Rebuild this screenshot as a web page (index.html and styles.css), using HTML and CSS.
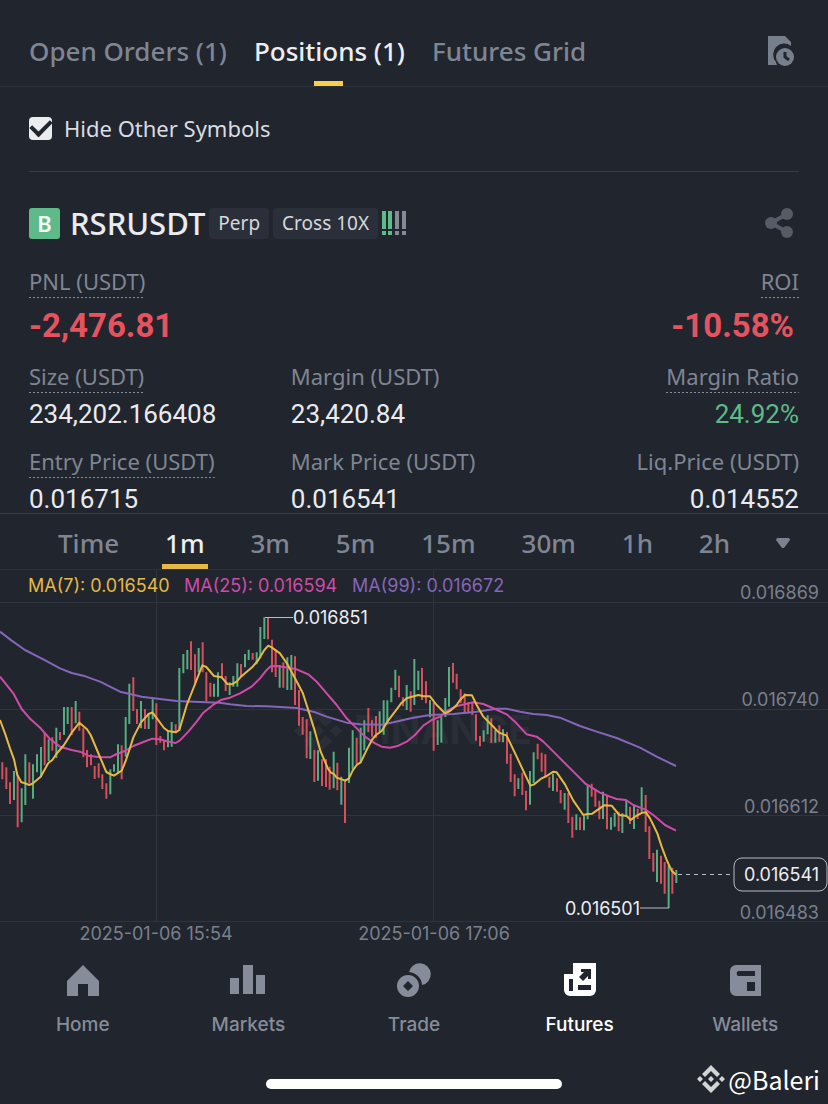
FILE: index.html
```html
<!DOCTYPE html>
<html lang="en">
<head>
<meta charset="utf-8">
<meta name="viewport" content="width=device-width, initial-scale=1">
<title>Futures – Positions</title>
<link rel="stylesheet" href="styles.css">
</head>
<body>
<div class="app">
  <header class="tabs">
    <button class="tab" type="button">Open Orders (1)</button>
    <button class="tab tab-active" type="button">Positions (1)</button>
    <button class="tab" type="button">Futures Grid</button>
    <button class="icon-button tabs-history" type="button" aria-label="Order history">
      <svg width="28" height="32" viewBox="0 0 28 32">
        <path fill="#787f8c" d="M1 1h17l6 6v4a11 11 0 0 0-15 16 9 9 0 0 0 1 3H1z"/>
        <circle cx="18" cy="22" r="9" fill="#787f8c"/>
        <path d="M18 17v5l4 3" fill="none" stroke="#21252e" stroke-width="3"/>
      </svg>
    </button>
  </header>

  <main class="position">
    <label class="filter">
      <input class="filter-box" type="checkbox" checked>
      <span>Hide Other Symbols</span>
    </label>

    <section class="card">
      <div class="symbol">
        <span class="side">B</span>
        <h1 class="symbol-name">RSRUSDT</h1>
        <span class="tag">Perp</span>
        <span class="tag">Cross 10X</span>
        <svg class="risk" width="25" height="25" viewBox="0 0 25 25">
          <path fill="#5eba89" d="M0 0h4v18H0zM6 0h4v18H6zM0 20h4v4H0zM6 20h4v4H6z"/>
          <path fill="#848a96" d="M13 0h4v18h-4zM20 0h4v18h-4zM13 20h4v4h-4zM20 20h4v4h-4z"/>
        </svg>
        <button class="icon-button symbol-share" type="button" aria-label="Share">
          <svg width="28" height="30" viewBox="0 0 28 30">
            <path d="M22 6 6 15l16 9" fill="none" stroke="#555b67" stroke-width="4"/>
            <g fill="#555b67"><circle cx="22" cy="6" r="6"/><circle cx="6" cy="15" r="6"/><circle cx="22" cy="24" r="6"/></g>
          </svg>
        </button>
      </div>

      <dl class="stats stats-main">
        <div class="stat"><dt><span class="hint">PNL (USDT)</span></dt><dd class="loss">-2,476.81</dd></div>
        <div class="stat stat-end"><dt><span class="hint">ROI</span></dt><dd class="loss">-10.58%</dd></div>
      </dl>
      <dl class="stats">
        <div class="stat"><dt><span class="hint">Size (USDT)</span></dt><dd>234,202.166408</dd></div>
        <div class="stat"><dt>Margin (USDT)</dt><dd>23,420.84</dd></div>
        <div class="stat stat-end"><dt><span class="hint">Margin Ratio</span></dt><dd class="gain">24.92%</dd></div>
        <div class="stat"><dt><span class="hint">Entry Price (USDT)</span></dt><dd>0.016715</dd></div>
        <div class="stat"><dt>Mark Price (USDT)</dt><dd>0.016541</dd></div>
        <div class="stat stat-end"><dt>Liq.Price (USDT)</dt><dd>0.014552</dd></div>
      </dl>
    </section>
  </main>

  <section class="chart">
    <div class="frames">
      <button class="frame" type="button">Time</button>
      <button class="frame frame-active" type="button">1m</button>
      <button class="frame" type="button">3m</button>
      <button class="frame" type="button">5m</button>
      <button class="frame" type="button">15m</button>
      <button class="frame" type="button">30m</button>
      <button class="frame" type="button">1h</button>
      <button class="frame" type="button">2h</button>
      <button class="frame" type="button" aria-label="More intervals"><svg width="14" height="10" viewBox="0 0 14 10"><path fill="#7b828f" d="M1 0h12l1 2-6 8H6L0 2z"/></svg></button>
    </div>
    <svg class="plot" viewBox="0 0 828 380" role="img" aria-label="RSRUSDT one minute candles">
      <path class="grid" d="M0 32.500H828M0 139.500H828M0 245.500H828M0 351.500H828M156.500 0V352M433.500 0V352"/>
      <g class="brand">
        <path d="M318 707l14 14-6 6-8-8-8 8-6-6zM318 755l14-14-6-6-8 8-8-8-6 6zM300 725l6 6-6 6-6-6zM336 725l6 6-6 6-6-6zM318 725l6 6-6 6-6-6z" transform="translate(0 -570)"/>
        <text x="354" y="174">BINANCE</text>
      </g>
      <g transform="scale(.33333)">
        <path id="up" class="candle up"/>
        <path id="down" class="candle down"/>
        <path class="ma ma99" d="M0 185L35 212 75 240 130 268 180 295 215 309 250 317 300 335 360 365 400 374 425 380 480 387 530 393 600 396 660 398 690 403 740 408 800 409 840 411 890 414 940 425 980 440 1040 458 1080 463 1145 464 1180 457 1240 443 1290 435 1360 432 1430 425 1490 416 1520 416 1560 425 1600 432 1640 435 1680 443 1740 468 1790 485 1850 504 1920 533 1970 560 2028 588"/>
        <path class="ma ma25" d="M0 320L40 370 65 417 92 448 122 475 150 507 180 530 215 540 240 545 265 557 295 561 330 562 350 552 375 543 400 528 430 516 457 506 480 508 500 514 527 519 540 511 565 485 590 455 610 428 640 404 665 389 690 383 720 370 755 350 780 325 800 300 812 289 830 288 855 292 890 298 925 313 950 335 980 370 1010 405 1040 445 1065 470 1095 500 1125 520 1145 530 1170 533 1195 527 1220 515 1245 495 1270 467 1295 450 1320 440 1345 420 1375 407 1420 397 1450 402 1485 417 1520 433 1545 455 1580 493 1610 500 1630 515 1675 560 1720 605 1755 640 1800 668 1830 680 1850 687 1878 690 1900 705 1935 718 1960 735 1995 765 2028 782"/>
        <path class="ma ma7" d="M0 450L15 490 30 535 42 568 52 615 64 637 76 640 88 645 99 640 122 620 145 579 157 570 169 552 192 525 215 488 238 458 261 478 272 495 296 552 319 606 330 612 342 617 365 602 377 573 388 540 400 502 423 457 446 432 457 427 469 443 492 474 504 483 527 487 538 480 561 403 584 345 607 286 619 291 642 318 665 322 682 342 695 343 710 335 723 320 735 310 758 290 775 270 793 240 805 227 815 232 840 250 862 282 885 325 908 368 920 405 942 475 962 545 985 598 993 608 1002 612 1010 623 1025 628 1036 632 1047 625 1058 602 1070 585 1082 577 1105 530 1117 508 1128 495 1145 483 1162 455 1185 425 1205 398 1220 385 1255 375 1270 379 1290 379 1310 405 1335 430 1350 423 1370 405 1380 390 1395 375 1416 376 1430 405 1450 440 1475 465 1496 487 1520 497 1550 560 1575 613 1591 647 1603 643 1625 625 1640 618 1660 605 1670 607 1695 643 1720 692 1750 735 1763 732 1777 731 1795 718 1812 706 1835 707 1858 735 1880 738 1892 750 1905 740 1927 728 1938 727 1950 745 1960 765 1972 790 1985 830 2000 870 2015 902 2028 914"/>
      </g>
      <text class="ma7-text" x="28" y="22">MA(7): 0.016540</text>
      <text class="ma25-text" x="184" y="22">MA(25): 0.016594</text>
      <text class="ma99-text" x="352" y="22">MA(99): 0.016672</text>
      <g class="axis" text-anchor="end">
        <text x="819" y="29">0.016869</text>
        <text x="819" y="136">0.016740</text>
        <text x="819" y="243">0.016612</text>
        <text x="819" y="349">0.016483</text>
      </g>
      <g class="axis" text-anchor="middle">
        <text x="156" y="370">2025-01-06 15:54</text>
        <text x="434" y="370">2025-01-06 17:06</text>
      </g>
      <path class="pointer" d="M265 47.500H293M640 338H669"/>
      <text class="mark" x="293" y="54">0.016851</text>
      <text class="mark" x="640" y="345" text-anchor="end">0.016501</text>
      <path class="pointer" stroke-dasharray="4 4" d="M678 304.500H734"/>
      <rect class="price" x="734" y="288" width="93" height="33" rx="8"/>
      <text class="mark" x="819" y="311" text-anchor="end">0.016541</text>
    </svg>
  </section>

  <nav class="nav">
    <a class="nav-item" href="#home">
      <svg width="36" height="36" viewBox="0 0 36 36"><path fill="currentColor" d="M18 3l16 16v15H23V22H13v12H2V19z"/></svg>
      Home
    </a>
    <a class="nav-item" href="#markets">
      <svg width="36" height="36" viewBox="0 0 36 36"><path fill="currentColor" d="M0 16h9v16H0zM13 3h10v29H13zM26 13h9v19h-9z"/></svg>
      Markets
    </a>
    <a class="nav-item" href="#trade">
      <svg width="36" height="36" viewBox="0 0 36 36">
        <path fill="currentColor" fill-rule="evenodd" d="M12 13a11 11 0 1 1 0 22 11 11 0 0 1 0-22zm0 6l-5 5 5 5 5-5z"/>
        <path fill="currentColor" d="M13 10A11 11 0 1 1 26 23 14 14 0 0 0 13 10z"/>
      </svg>
      Trade
    </a>
    <a class="nav-item nav-active" href="#futures">
      <svg width="36" height="36" viewBox="0 0 36 36"><path fill="currentColor" fill-rule="evenodd" d="M11 1h23v27a6 6 0 0 1-6 6H8a6 6 0 0 1-6-6V12h9zM7 17v12h4V17zm9 6v5h13v-5zM19 7v3h3l-5 5 4 4 5-5v3h3V7z"/></svg>
      Futures
    </a>
    <a class="nav-item" href="#wallets">
      <svg width="36" height="36" viewBox="0 0 36 36"><path fill="currentColor" fill-rule="evenodd" d="M9 3h25v31H9a6 6 0 0 1-6-6V9a6 6 0 0 1 6-6zm2 6a3 3 0 0 0 0 5h17V9zm9 11v9h8v-9z"/></svg>
      Wallets
    </a>
  </nav>

  <div class="home-bar"></div>
  <div class="author">
    <svg width="28" height="28" viewBox="0 0 28 28"><path fill="#d3d4d6" d="M14 0l9 9-3 3-6-6-6 6-3-3zM14 28l9-9-3-3-6 6-6-6-3 3zM3 11l3 3-3 3-3-3zM25 11l3 3-3 3-3-3zM14 11l3 3-3 3-3-3z"/></svg>
    <span>@Baleri</span>
  </div>
</div>
<script src="chart.js"></script>
</body>
</html>
```

FILE: chart.js
```js
// One entry per minute: direction, top and bottom of the bar.
const bars = `
r577-628 r592-657 r637-702 g603-690 r615-772 g655-757 g553-705 r577-640 g583-686 g553-607
g531-620 r488-586 g508-573 r502-542 g473-564 r486-510 g411-495 g411-462 r411-495 g393-460
r425-482 r475-562 r540-592 r553-586 r588-627 r580-623 r613-657 r640-686 g598-673 g583-605
g523-608 r526-628 g441-560 g341-462 r322-423 r417-462 g393-475 r417-477 g430-477 g388-448
r400-525 r498-518 r510-541 g483-532 g456-530 r463-488 g294-482 g252-310 g240-298 r214-300
r253-343 g234-307 r217-307 r307-395 r338-380 g341-380 g307-380 r280-325 r318-363 g337-375
g318-350 g280-350 r282-320 g252-292 g239-270 r249-269 g247-283 g171-265 g142-207 r142-208
r209-307 r240-321 g285-353 r277-353 g262-360 g255-360 r259-405 r360-467 r441-494 r448-565
g484-567 r540-636 g541-632 r568-648 r568-651 r590-659 g545-655 r578-661 g620-704 r628-759
g533-639 g481-598 r503-583 g473-578 g451-541 r414-487 r451-500 r438-503 g424-487 g391-494
g391-455 g353-397 g299-360 r317-382 r382-409 g345-420 r364-425 g267-405 g302-360 r294-390
r334-400 g390-442 r397-542 g451-525 g438-518 g384-441 g291-410 r279-338 r311-358 r358-400
r370-432 r397-430 r397-435 r433-512 r498-529 g481-515 g436-493 r445-519 g480-518 r466-515
g478-517 r486-581 r551-636 r613-679 g625-657 r608-675 r662-721 g603-704 g547-640 r521-568
r548-605 r553-620 r620-653 g611-663 r625-665 r660-700 g669-719 r669-759 r740-803 g733-780
r742-780 g738-781 g645-748 r641-680 r657-710 r692-748 g665-747 r678-778 g742-779 g728-770
r725-784 g730-789 g693-735 r710-762 g708-777 r716-747 g652-725 r675-786 r769-867 r849-905
g839-936 r857-941 r876-971 g886-1014 r893-971 g900-939`.trim().split(/\s+/);

const first = 7;
const last = 2029;
const step = (last - first) / (bars.length - 1);
const paths = { g: "", r: "" };

bars.forEach((bar, i) => {
  const [top, bottom] = bar.slice(1).split("-");
  paths[bar[0]] += `M${Math.round(first + i * step)} ${top}V${bottom}`;
});

document.getElementById("up").setAttribute("d", paths.g);
document.getElementById("down").setAttribute("d", paths.r);
```

FILE: styles.css
```css
* {
  box-sizing: border-box;
}

body {
  margin: 0;
  background: #21252e;
  color: #e9ebef;
  font-family: "Noto Sans", "Liberation Sans", sans-serif;
}

button {
  padding: 0;
  border: 0;
  background: none;
  color: inherit;
  font: inherit;
}

svg {
  display: block;
}

.app {
  position: relative;
  min-height: 100vh;
}

.tabs {
  display: flex;
  align-items: stretch;
  gap: 27px;
  height: 87px;
  padding: 0 33px 0 29px;
  border-bottom: 1px solid #2e333d;
}

.tab {
  position: relative;
  padding-top: 15px;
  color: #7f8592;
  font-size: 26px;
  font-weight: 500;
  white-space: nowrap;
}

.tab-active {
  color: #eceef2;
}

.tab-active::after {
  content: "";
  position: absolute;
  bottom: 0;
  left: 50%;
  width: 29px;
  height: 5px;
  margin-left: -15px;
  background: #f7ce4f;
}

.tabs-history {
  margin-left: auto;
  padding-top: 15px;
}

.position {
  padding: 0 29px;
}

.filter {
  display: flex;
  align-items: center;
  gap: 12px;
  height: 85px;
  padding-bottom: 2px;
  border-bottom: 1px solid #373b46;
  color: #d9dce2;
  font-size: 22px;
}

.filter-box {
  display: grid;
  place-items: center;
  appearance: none;
  width: 23px;
  height: 23px;
  margin: 0;
  padding-bottom: 5px;
  border-radius: 4px;
  background: #eaecf0;
}

.filter-box:checked::before {
  content: "";
  width: 16px;
  height: 9px;
  border: solid #21252e;
  border-width: 0 0 4px 4px;
  transform: rotate(-45deg);
}

.symbol {
  display: flex;
  align-items: center;
  gap: 4px;
  height: 93px;
  padding-top: 9px;
}

.side {
  width: 31px;
  height: 31px;
  margin-right: 6px;
  border-radius: 3px;
  background: #5eba89;
  color: #f4faf6;
  font-size: 22px;
  font-weight: 600;
  line-height: 31px;
  text-align: center;
}

.symbol-name {
  margin: 0;
  font-size: 31px;
  font-weight: 500;
}

.tag {
  padding: 0 9px;
  border-radius: 4px;
  background: #2a2f39;
  color: #d5d8de;
  font-size: 19px;
  line-height: 31px;
}

.symbol-share {
  margin-left: auto;
  padding-right: 6px;
}

.stats {
  display: grid;
  grid-template-columns: 34fr 33fr 33fr;
  row-gap: 17px;
  margin: 0;
}

.stats-main {
  grid-template-columns: 1fr 1fr;
  margin-bottom: 13px;
}

.stat-end {
  text-align: right;
}

.stat dt {
  height: 40px;
  color: #7f8592;
  font-size: 22px;
  line-height: 33px;
}

.hint {
  display: inline-block;
  height: 33px;
  background: repeating-linear-gradient(90deg, #868c99 0 2px, transparent 2px 4px) bottom / 100% 1px no-repeat;
}

.stat dd {
  margin: 0;
  font-family: Roboto, "Liberation Sans", sans-serif;
  font-size: 26px;
  line-height: 28px;
}

.stat .loss {
  color: #e5535f;
  font-size: 33px;
  font-weight: 700;
  line-height: 42px;
}

.stat-end .loss {
  padding-right: 5px;
}

.stat .gain {
  color: #5eba89;
}

.chart {
  border-top: 1px solid #373c47;
}

.frames {
  display: flex;
  justify-content: space-between;
  height: 56px;
  padding: 0 38px 0 58px;
  border-bottom: 1px solid #2b303a;
  color: #7f8592;
  font-size: 26px;
  font-weight: 500;
}

.frame {
  padding-top: 7px;
  border-bottom: 5px solid transparent;
}

.frame-active {
  margin: 0 -3px;
  padding: 7px 3px 0;
  border-color: #e6b943;
  color: #eceef2;
}

.plot {
  width: 100%;
  font-family: Inter, "Liberation Sans", sans-serif;
  font-size: 18px;
}

.grid {
  fill: none;
  stroke: #2f343f;
}

.brand {
  fill: #2a2e37;
  font-size: 39px;
  font-weight: 700;
}

.candle {
  fill: none;
  stroke-width: 6;
}

.up {
  stroke: #56ad80;
}

.down {
  stroke: #d84f5b;
}

.ma {
  fill: none;
  stroke-width: 6;
  stroke-linejoin: round;
}

.ma7 {
  stroke: #e6b943;
}

.ma25 {
  stroke: #cf4ba8;
}

.ma99 {
  stroke: #8566b8;
}

.ma7-text {
  fill: #e6b943;
}

.ma25-text {
  fill: #cf4ba8;
}

.ma99-text {
  fill: #8566b8;
}

.axis {
  fill: #7a808c;
}

.mark {
  fill: #eceef2;
}

.pointer {
  fill: none;
  stroke: #b9bcc3;
  stroke-width: 1;
}

.price {
  fill: #21252e;
  stroke: #b9bcc3;
}

.nav {
  display: grid;
  grid-template-columns: repeat(5, 1fr);
  padding-top: 12px;
}

.nav-item {
  display: flex;
  flex-direction: column;
  align-items: center;
  gap: 15px;
  color: #868c99;
  font-family: Inter, "Liberation Sans", sans-serif;
  font-size: 19px;
  font-weight: 500;
  line-height: 24px;
  text-decoration: none;
}

.nav-active {
  color: #fff;
}

.home-bar {
  width: 296px;
  height: 10px;
  margin: 42px auto 0;
  border-radius: 5px;
  background: #fff;
}

.author {
  position: absolute;
  right: 8px;
  bottom: 7px;
  display: flex;
  align-items: center;
  gap: 3px;
  color: #fff;
  font-family: "Noto Sans CJK SC", sans-serif;
  font-size: 25px;
  line-height: 36px;
}
```
